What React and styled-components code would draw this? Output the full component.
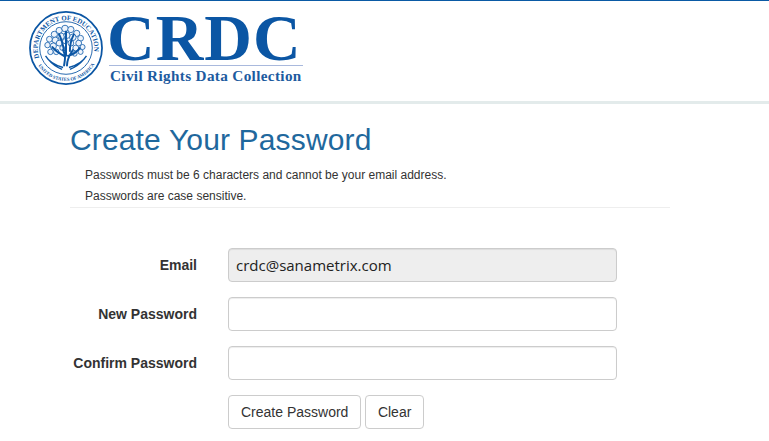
import React from "react";
import styled, { createGlobalStyle } from "styled-components";

const Global = createGlobalStyle`
  html, body { margin: 0; padding: 0; background: #fff; }
  body { font-family: "Liberation Sans", Arial, sans-serif; color: #333; overflow: hidden; }
`;
const Page = styled.div`
  width: 769px;
  height: 441px;
  overflow: hidden;
  border-top: 1px solid #0a5aa5;
  box-sizing: border-box;
`;
const Header = styled.header`
  height: 103px;
  box-sizing: border-box;
  padding: 10px 0 0 29px;
  border-bottom: 3px solid #e3ebeb;
`;
const Logo = styled.div`
  display: flex;
  align-items: flex-start;
  gap: 4px;
`;
const Wordmark = styled.div`
  display: flex;
  flex-direction: column;
  width: 196px;
  color: #0b56a4;
  font-family: "Liberation Serif", "Times New Roman", serif;
  font-weight: 700;
`;
const Mark = styled.div`
  font-size: 66px;
  line-height: 54px;
  height: 54px;
  letter-spacing: 1px;
  white-space: nowrap;
  box-sizing: border-box;
`;
const Tagline = styled.div`
  border-top: 1px solid #a9b9dd;
  margin-left: 2px;
  font-size: 15.2px;
  letter-spacing: 0.35px;
  line-height: 19px;
  white-space: nowrap;
  padding-left: 1px;
  color: #1d5b9f;
`;
const Main = styled.main`
  width: 600px;
  margin-left: 70px;
`;
const Title = styled.h1`
  margin: 0;
  padding-top: 18px;
  font-size: 30px;
  line-height: 36px;
  font-weight: 400;
  letter-spacing: 0.15px;
  color: #1f689d;
`;
const Notes = styled.div`
  padding: 7px 0 0 15px;
  height: 50px;
  box-sizing: border-box;
  border-bottom: 1px solid #eee;
  margin-bottom: 40px;
`;
const Note = styled.p`
  margin: 0;
  font-size: 12px;
  line-height: 21px;
`;
const Row = styled.div`
  display: flex;
  align-items: center;
  height: 34px;
  margin-bottom: 15px;
`;
const Label = styled.label`
  width: 127px;
  text-align: right;
  font-size: 14px;
  font-weight: 700;
  margin-right: 31px;
  color: #333;
`;
const Field = styled.input`
  width: 389px;
  height: 34px;
  box-sizing: border-box;
  border: 1px solid #ccc;
  border-radius: 4px;
  box-shadow: inset 0 1px 1px rgba(0, 0, 0, 0.075);
  padding: 0 7px;
  font-family: "Open Sans", sans-serif;
  font-size: 15px;
  color: #222;
  background: ${(p) => (p.disabled ? "#eee" : "#fff")};
  outline: none;
  &:disabled { opacity: 1; color: #222; -webkit-text-fill-color: #222; }
`;
const Actions = styled.div`
  display: flex;
  gap: 4px;
  margin-left: 158px;
`;
const Button = styled.button`
  height: 34px;
  box-sizing: border-box;
  border: 1px solid #ccc;
  border-radius: 4px;
  background: #fff;
  color: #333;
  font-family: "Liberation Sans", Arial, sans-serif;
  font-size: 14px;
  padding: 0 ${(p) => (p.$compact ? "11.5px" : "12px")};
`;

const LEAVES = [
  [26, 24, 3.2], [31, 20, 3.2], [37, 18, 3.4], [43, 19, 3.2], [49, 23, 3.2], [53, 28, 3],
  [21, 29, 3], [27, 30, 3.2], [33, 26, 3.4], [39, 25, 3.2], [45, 27, 3.4], [51, 33, 3],
  [19, 35, 2.8], [25, 36, 3.2], [31, 33, 3], [37, 31, 2.6], [43, 33, 3], [48, 38, 3], [55, 37, 2.6],
  [22, 42, 2.8], [28, 42, 2.8], [34, 38, 2.4], [53, 42, 2.6], [47, 44, 2.4],
];

const Seal = () => (
  <svg width="74" height="74" viewBox="0 0 76 76" aria-label="Department of Education seal">
    <defs>
      <path id="sealTop" d="M 11 49 A 29 29 0 1 1 65 49" />
      <path id="sealBottom" d="M 9.5 56 A 33.6 33.6 0 0 0 66.5 56" />
    </defs>
    <circle cx="38" cy="38" r="37" fill="#fff" stroke="#0b56a4" strokeWidth="1.8" />
    <circle cx="38" cy="38" r="27" fill="#fff" stroke="#0b56a4" strokeWidth="0.9" />
    <text fontFamily="Liberation Serif, serif" fontWeight="700" fontSize="7" fill="#0b56a4">
      <textPath href="#sealTop" startOffset="1">DEPARTMENT OF EDUCATION</textPath>
    </text>
    <text fontFamily="Liberation Serif, serif" fontWeight="700" fontSize="4.8" fill="#0b56a4">
      <textPath href="#sealBottom" startOffset="0">UNITED STATES OF AMERICA</textPath>
    </text>
    <g fill="#eef4fb" stroke="#1f66b0" strokeWidth="0.9">
      {LEAVES.map(([x, y, r]) => (
        <circle key={`${x}-${y}`} cx={x} cy={y} r={r} />
      ))}
    </g>
    <path d="M36 56 C37 50 38 46 35 40 M39 56 C39 50 41 46 45 40 M37 47 C33 44 29 43 24 37 M40 46 C44 45 49 43 52 38 M36 41 C35 35 34 30 31 24 M42 41 C42 35 43 30 46 24 M38 46 C38 38 38 30 38 21"
      fill="none" stroke="#0b56a4" strokeWidth="2" strokeLinecap="round" />
    <path d="M17 46 C21 53 28 56 35 58 M59 46 C55 53 48 56 41 58 M20 50 C24 55 29 58 34 60 M56 50 C52 55 47 58 42 60"
      fill="none" stroke="#0b56a4" strokeWidth="1.4" />
  </svg>
);

export default function App() {
  return (
    <Page>
      <Global />
      <Header>
        <Logo>
          <Seal />
          <Wordmark>
            <Mark>CRDC</Mark>
            <Tagline>Civil Rights Data Collection</Tagline>
          </Wordmark>
        </Logo>
      </Header>
      <Main>
        <Title>Create Your Password</Title>
        <Notes>
          <Note>Passwords must be 6 characters and cannot be your email address.</Note>
          <Note>Passwords are case sensitive.</Note>
        </Notes>
        <Row>
          <Label>Email</Label>
          <Field disabled defaultValue="crdc@sanametrix.com" />
        </Row>
        <Row>
          <Label>New Password</Label>
          <Field type="password" />
        </Row>
        <Row>
          <Label>Confirm Password</Label>
          <Field type="password" />
        </Row>
        <Actions>
          <Button>Create Password</Button>
          <Button $compact>Clear</Button>
        </Actions>
      </Main>
    </Page>
  );
}
